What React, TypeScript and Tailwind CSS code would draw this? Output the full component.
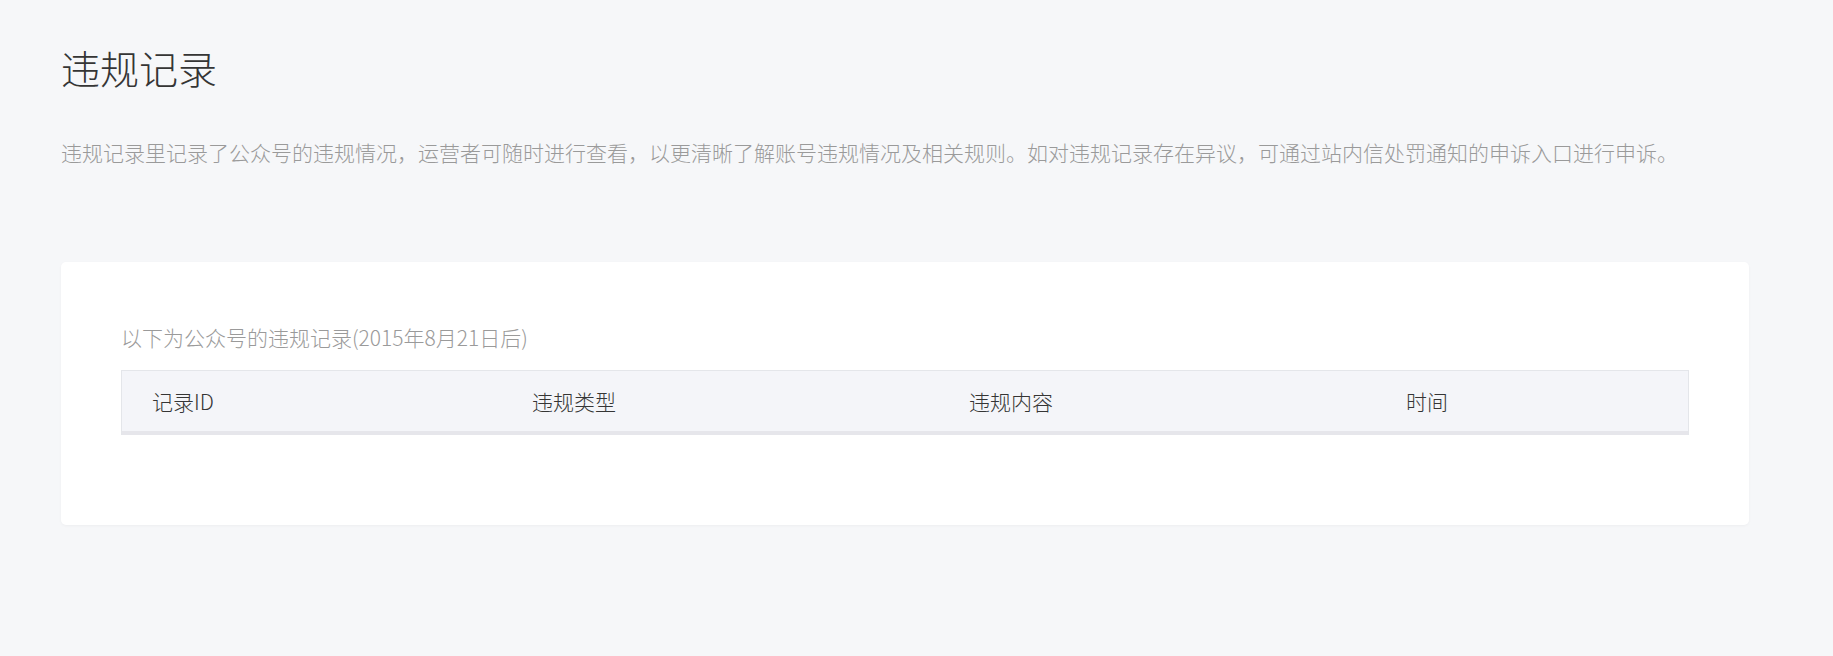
import React from "react";

const font = { fontFamily: '"Noto Sans CJK SC", "Noto Sans", sans-serif' };

export default function App() {
  const cols = ["记录ID", "违规类型", "违规内容", "时间"];
  return (
    <div
      className="min-h-[656px] w-full bg-[#f6f7f9] pl-[61px] pr-[84px] pt-[40px]"
      style={font}
    >
      <h1 className="text-[39px] leading-[54px] text-[#353535] font-light">违规记录</h1>
      <p className="mt-[43px] text-[21px] leading-[30px] text-[#9a9a9a] font-light whitespace-nowrap">
        违规记录里记录了公众号的违规情况，运营者可随时进行查看，以更清晰了解账号违规情况及相关规则。如对违规记录存在异议，可通过站内信处罚通知的申诉入口进行申诉。
      </p>
      <div className="mt-[95px] w-[1688px] rounded-[5px] bg-white px-[60px] pt-[60px] pb-[90px] shadow-[0_1px_3px_rgba(0,0,0,0.04)]">
        <div className="text-[21px] leading-[30px] text-[#9a9a9a] font-light">
          以下为公众号的违规记录(2015年8月21日后)
        </div>
        <div className="mt-[18px] border border-b-0 border-[#e4e6ea] bg-[#f4f5f9]">
          <div className="grid h-[60px] grid-cols-[380px_437px_437px_1fr] items-center border-b-[4px] border-[#e6e6eb] box-content">
            {cols.map((c) => (
              <div key={c} className="pl-[30px] text-[21px] leading-[30px] text-[#353535] font-light">
                {c}
              </div>
            ))}
          </div>
        </div>
      </div>
    </div>
  );
}
